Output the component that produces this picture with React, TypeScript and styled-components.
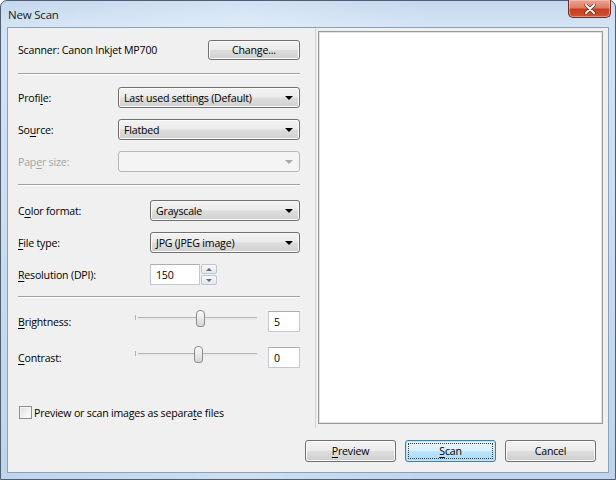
import styled, { createGlobalStyle } from 'styled-components';

const GlobalStyle = createGlobalStyle`
  html, body {
    margin: 0;
    padding: 0;
    background: #ffffff;
  }
  body {
    font-family: "Open Sans", "Noto Sans", sans-serif;
    font-size: 10.6px;
    letter-spacing: -0.2px;
    color: #000;
  }
`;

const Window = styled.div`
  width: 616px;
  height: 480px;
  box-sizing: border-box;
  display: flex;
  flex-direction: column;
  padding: 0 6px 6px;
  border: 1px solid #4e5e73;
  border-radius: 7px 7px 0 0;
  background: linear-gradient(90deg, rgba(255,255,255,0) 0%, rgba(255,255,255,0.25) 40%, rgba(255,255,255,0) 70%),
    linear-gradient(180deg, #c4d8ef 0%, #d4e3f4 5%, #bfd4eb 100%);
`;

const TitleBar = styled.div`
  height: 26px;
  display: flex;
  align-items: center;
  justify-content: space-between;
`;

const Title = styled.span`
  padding-left: 1px;
  font-size: 11.5px;
  color: #1a1a1a;
`;

const CloseButton = styled.div`
  align-self: flex-start;
  margin: -1px -2px 0 0;
  width: 43px;
  height: 18px;
  box-sizing: border-box;
  display: flex;
  align-items: center;
  justify-content: center;
  border: 1px solid #6b2f26;
  border-top: none;
  border-radius: 0 0 5px 5px;
  background: linear-gradient(180deg, #eba596 0%, #dd7d64 45%, #c63d22 55%, #d2522f 100%);
  box-shadow: inset 0 0 0 1px rgba(255, 220, 210, 0.45);
`;

const Client = styled.div`
  flex: 1;
  display: flex;
  flex-direction: column;
  min-height: 0;
  border: 1px solid #8ba2bd;
  background: #f0f0f0;
`;

const Main = styled.div`
  flex: 1;
  display: flex;
  min-height: 0;
`;

const Settings = styled.div`
  width: 307px;
  box-sizing: border-box;
  padding: 11px 15px 0 10px;
  display: flex;
  flex-direction: column;
`;

const Group = styled.div<{ $gap: number }>`
  display: flex;
  flex-direction: column;
  gap: ${(p) => p.$gap}px;
`;

const Divider = styled.div<{ $before: number; $after: number }>`
  height: 1px;
  background: #a0a0a0;
  box-shadow: 0 1px 0 #ffffff;
  margin: ${(p) => p.$before}px 0 ${(p) => p.$after}px;
`;

const Row = styled.div<{ $label: number }>`
  display: grid;
  grid-template-columns: ${(p) => p.$label}px 1fr;
  align-items: center;
  height: 21px;
`;

const SplitRow = styled.div`
  display: flex;
  align-items: center;
  justify-content: space-between;
  height: 21px;
`;

const SliderRow = styled.div`
  display: grid;
  grid-template-columns: 117px 122px 1fr;
  align-items: center;
  height: 21px;
`;

const Label = styled.span<{ $disabled?: boolean }>`
  white-space: nowrap;
  color: ${(p) => (p.$disabled ? '#a3a3a3' : '#000')};
`;

const Acc = styled.span`
  text-decoration: underline;
  text-underline-offset: 2px;
`;

const Combo = styled.div<{ $disabled?: boolean }>`
  position: relative;
  height: 21px;
  box-sizing: border-box;
  display: flex;
  align-items: center;
  padding-left: 5px;
  border: 1px solid ${(p) => (p.$disabled ? '#b5b8bb' : '#707070')};
  border-radius: 3px;
  background: ${(p) =>
    p.$disabled
      ? '#f4f4f4'
      : 'linear-gradient(180deg, #f3f3f3 0%, #ebebeb 48%, #dddddd 52%, #d1d1d1 100%)'};
  box-shadow: ${(p) => (p.$disabled ? 'none' : 'inset 0 0 0 1px #fbfbfb')};
  &::after {
    content: '';
    position: absolute;
    right: 6px;
    top: 8px;
    border-left: 4px solid transparent;
    border-right: 4px solid transparent;
    border-top: 4px solid ${(p) => (p.$disabled ? '#a8a8a8' : '#000')};
  }
`;

const Button = styled.div<{ $width: number; $height: number; $default?: boolean }>`
  width: ${(p) => p.$width}px;
  height: ${(p) => p.$height}px;
  box-sizing: border-box;
  display: flex;
  align-items: center;
  justify-content: center;
  border: 1px solid ${(p) => (p.$default ? '#3c7fb1' : '#707070')};
  border-radius: 3px;
  background: ${(p) =>
    p.$default
      ? 'linear-gradient(180deg, #eaf6fd 0%, #d9f0fc 48%, #bee6fd 52%, #a7d9f5 100%)'
      : 'linear-gradient(180deg, #f3f3f3 0%, #ebebeb 48%, #dddddd 52%, #cfcfcf 100%)'};
  box-shadow: inset 0 0 0 1px ${(p) => (p.$default ? '#c4e5f6' : '#fcfcfc')};
  position: relative;
  &::before {
    content: '';
    display: ${(p) => (p.$default ? 'block' : 'none')};
    position: absolute;
    inset: 2px;
    border: 1px dotted #3a3a3a;
  }
`;

const SpinBox = styled.div`
  display: flex;
  align-items: stretch;
  width: 67px;
  height: 21px;
`;

const TextBox = styled.div<{ $width: number }>`
  width: ${(p) => p.$width}px;
  box-sizing: border-box;
  display: flex;
  align-items: center;
  padding-left: 5px;
  background: #ffffff;
  border: 1px solid #c5c8ce;
  border-top-color: #abadb3;
`;

const SpinButtons = styled.div`
  margin-left: 1px;
  width: 16px;
  display: flex;
  flex-direction: column;
  gap: 1px;
`;

const SpinHalf = styled.div<{ $up?: boolean }>`
  flex: 1;
  display: flex;
  align-items: center;
  justify-content: center;
  border: 1px solid #c0c6ce;
  border-radius: 2px;
  background: linear-gradient(180deg, #f7f8f9 0%, #e3e7eb 100%);
  &::after {
    content: '';
    border-left: 3px solid transparent;
    border-right: 3px solid transparent;
    ${(p) => (p.$up ? 'border-bottom' : 'border-top')}: 3px solid #5b6a7c;
  }
`;

const Slider = styled.div`
  position: relative;
  height: 21px;
  margin-top: -6px;
`;

const Track = styled.div`
  position: absolute;
  left: 3px;
  right: 0;
  top: 9px;
  height: 2px;
  border-top: 1px solid #b4b4b4;
  background: #e9e9e9;
  &::before {
    content: '';
    position: absolute;
    left: -3px;
    top: -3px;
    width: 1px;
    height: 5px;
    background: #b4b4b4;
  }
`;

const Thumb = styled.div`
  position: absolute;
  top: 2px;
  width: 9px;
  height: 17px;
  margin-left: -4px;
  box-sizing: border-box;
  border: 1px solid #8d8d8d;
  border-radius: 4px 4px 3px 3px;
  background: linear-gradient(180deg, #fbfbfb 0%, #e9e9e9 50%, #d4d4d4 100%);
`;

const ValueBox = styled(TextBox)`
  justify-self: end;
  height: 21px;
`;

const CheckRow = styled.div`
  display: flex;
  align-items: center;
  gap: 2px;
  margin-top: 37px;
  padding-left: 1px;
  height: 15px;
`;

const CheckBox = styled.div`
  width: 13px;
  height: 13px;
  box-sizing: border-box;
  border: 1px solid #8e8f8f;
  background: linear-gradient(135deg, #dcdcdc 0%, #f4f4f4 60%, #ffffff 100%);
  box-shadow: inset 0 0 0 1px #f4f4f4;
`;

const PreviewPane = styled.div`
  flex: 1;
  display: flex;
  padding: 3px 5px 4px 2px;
  border-left: 1px solid #d4d4d4;
`;

const PreviewBox = styled.div`
  flex: 1;
  background: #ffffff;
  border: 1px solid #9a9a9a;
  box-shadow: inset 0 0 0 1px #e2e2e2;
`;

const Footer = styled.div`
  display: flex;
  justify-content: flex-end;
  gap: 9px;
  padding: 12px 12px 10px;
`;

function CloseGlyph() {
  return (
    <svg width="12" height="10" viewBox="0 0 12 10">
      <path d="M2 1 L10 9 M10 1 L2 9" stroke="#5a1f14" strokeWidth="3.2" strokeLinecap="round" />
      <path d="M2 1 L10 9 M10 1 L2 9" stroke="#ffffff" strokeWidth="2" strokeLinecap="round" />
    </svg>
  );
}

const sliders = [
  { label: 'B', rest: 'rightness:', value: 5 },
  { label: 'C', rest: 'ontrast:', value: 0 },
];

export default function App() {
  return (
    <>
      <GlobalStyle />
      <Window>
        <TitleBar>
          <Title>New Scan</Title>
          <CloseButton>
            <CloseGlyph />
          </CloseButton>
        </TitleBar>
        <Client>
          <Main>
            <Settings>
              <SplitRow>
                <Label>Scanner: Canon Inkjet MP700</Label>
                <Button $width={92} $height={20}>
                  Chan<Acc>g</Acc>e...
                </Button>
              </SplitRow>
              <Divider $before={13} $after={13} />
              <Group $gap={11}>
                <Row $label={100}>
                  <Label>
                    Profi<Acc>l</Acc>e:
                  </Label>
                  <Combo>Last used settings (Default)</Combo>
                </Row>
                <Row $label={100}>
                  <Label>
                    So<Acc>u</Acc>rce:
                  </Label>
                  <Combo>Flatbed</Combo>
                </Row>
                <Row $label={100}>
                  <Label $disabled>
                    Pap<Acc>e</Acc>r size:
                  </Label>
                  <Combo $disabled />
                </Row>
              </Group>
              <Divider $before={12} $after={15} />
              <Group $gap={11}>
                <Row $label={132}>
                  <Label>
                    C<Acc>o</Acc>lor format:
                  </Label>
                  <Combo>Grayscale</Combo>
                </Row>
                <Row $label={132}>
                  <Label>
                    <Acc>F</Acc>ile type:
                  </Label>
                  <Combo>JPG (JPEG image)</Combo>
                </Row>
                <Row $label={132}>
                  <Label>
                    <Acc>R</Acc>esolution (DPI):
                  </Label>
                  <SpinBox>
                    <TextBox $width={50}>150</TextBox>
                    <SpinButtons>
                      <SpinHalf $up />
                      <SpinHalf />
                    </SpinButtons>
                  </SpinBox>
                </Row>
              </Group>
              <Divider $before={11} $after={14} />
              <Group $gap={15}>
                {sliders.map((s) => (
                  <SliderRow key={s.label}>
                    <Label>
                      <Acc>{s.label}</Acc>
                      {s.rest}
                    </Label>
                    <Slider>
                      <Track />
                      <Thumb style={{ left: `${3 + ((s.value + 100) / 200) * 119}px` }} />
                    </Slider>
                    <ValueBox $width={32}>{s.value}</ValueBox>
                  </SliderRow>
                ))}
              </Group>
              <CheckRow>
                <CheckBox />
                <Label>
                  Preview or scan images as separa<Acc>t</Acc>e files
                </Label>
              </CheckRow>
            </Settings>
            <PreviewPane>
              <PreviewBox />
            </PreviewPane>
          </Main>
          <Footer>
            <Button $width={91} $height={22}>
              <Acc>P</Acc>review
            </Button>
            <Button $width={91} $height={22} $default>
              <Acc>S</Acc>can
            </Button>
            <Button $width={91} $height={22}>
              Cancel
            </Button>
          </Footer>
        </Client>
      </Window>
    </>
  );
}
